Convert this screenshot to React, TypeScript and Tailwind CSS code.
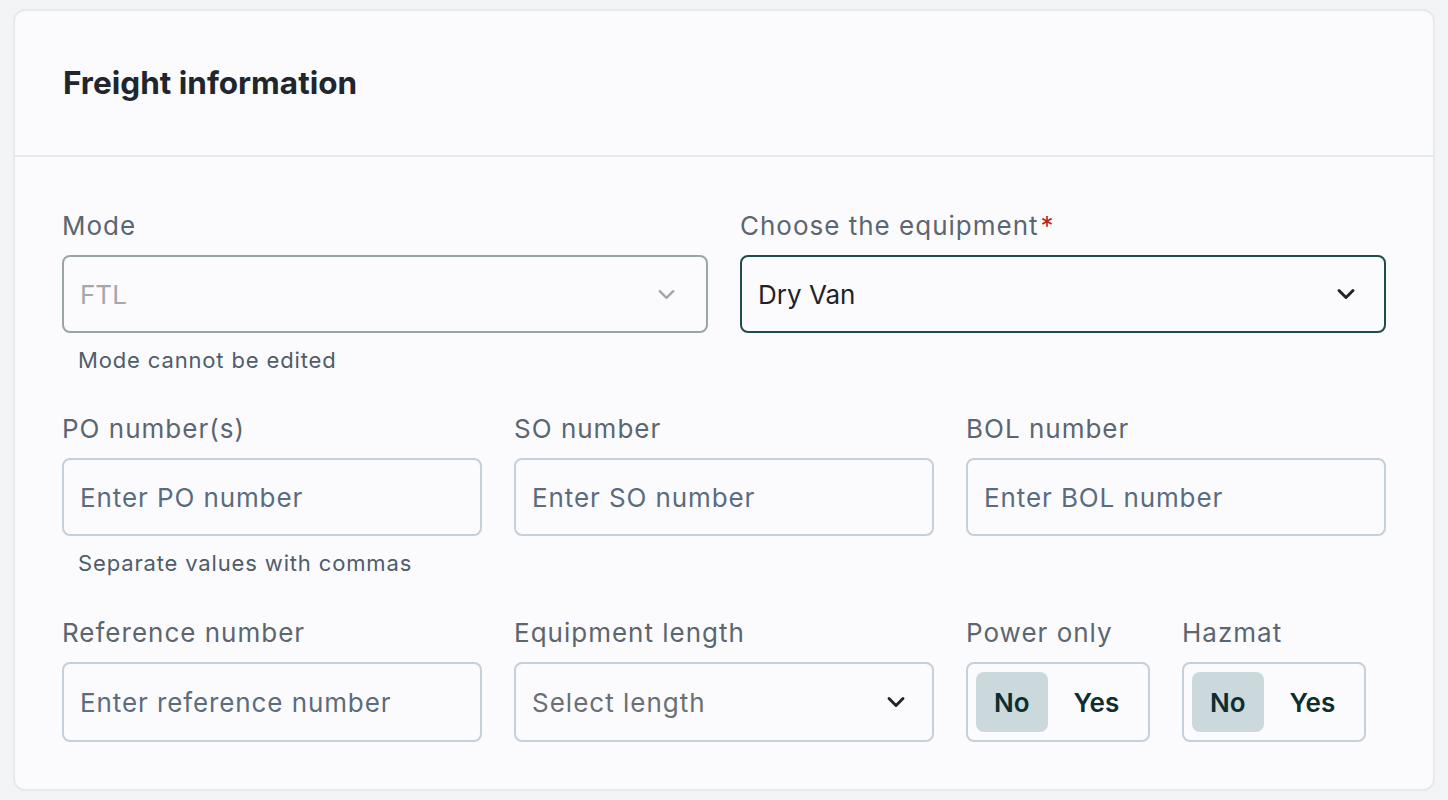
import { ChevronDown } from "lucide-react";

const FONT = { fontFamily: "Inter, 'Noto Sans', sans-serif" };

function Label({ children, required }: { children: React.ReactNode; required?: boolean }) {
  return (
    <div className="mb-[13px] h-8 text-[26px] leading-8 tracking-[1px] text-[#5b6670]">
      {children}
      {required && <span className="ml-0.5 text-[#b3261e]">*</span>}
    </div>
  );
}

function Helper({ children }: { children: React.ReactNode }) {
  return (
    <div className="mt-[13px] pl-4 text-[22px] leading-7 tracking-[0.85px] text-[#4f5d6b]">{children}</div>
  );
}

function TextInput({ placeholder }: { placeholder: string }) {
  return (
    <div className="flex h-[78px] items-center rounded-lg border-2 border-[#c6d0da] px-4 text-[26px] tracking-[0.9px] text-[#5a6c7e]">
      {placeholder}
    </div>
  );
}

function Toggle() {
  return (
    <div className="flex h-[80px] w-[184px] items-center gap-2 rounded-lg border-2 border-[#c6d0da] p-2">
      <div className="flex h-[60px] items-center rounded-lg bg-[#cbd9dc] px-[18px] text-[26px] font-semibold text-[#0d2e2c]">
        No
      </div>
      <div className="flex h-[60px] items-center px-[18px] text-[26px] font-semibold text-[#0d2e2c]">
        Yes
      </div>
    </div>
  );
}

export default function App() {
  return (
    <div className="min-h-screen bg-[#f3f4f6] px-[13px] pt-[9px]" style={FONT}>
      <div className="w-[1422px] rounded-xl border-2 border-[#e6e9ee] bg-[#fbfbfd]">
        {/* Header */}
        <div className="flex h-[146px] items-center border-b-2 border-[#e6e9ee] px-[48px]">
          <h2 className="text-[31.5px] font-bold text-[#1f262e]">Freight information</h2>
        </div>

        {/* Body */}
        <div className="px-[47px] pt-[53px] pb-[47px]">
          {/* Row 1 */}
          <div className="grid grid-cols-2 gap-8">
            <div>
              <Label>Mode</Label>
              <div className="flex h-[78px] items-center justify-between rounded-lg border-2 border-[#9ba5a8] pl-4 pr-[26px] text-[26px] text-[#a5a7a9]">
                FTL
                <ChevronDown size={27} strokeWidth={2} className="text-[#a2a6a9]" />
              </div>
              <Helper>Mode cannot be edited</Helper>
            </div>
            <div>
              <Label required>Choose the equipment</Label>
              <div className="flex h-[78px] items-center justify-between rounded-lg border-2 border-[#1e4e4b] pl-4 pr-[24px] text-[26px] text-[#1f2328]">
                Dry Van
                <ChevronDown size={28} strokeWidth={2.5} className="text-[#1f2328]" />
              </div>
            </div>
          </div>

          {/* Row 2 */}
          <div className="mt-[39px] grid grid-cols-3 gap-8">
            <div>
              <Label>PO number(s)</Label>
              <TextInput placeholder="Enter PO number" />
              <Helper>Separate values with commas</Helper>
            </div>
            <div>
              <Label>SO number</Label>
              <TextInput placeholder="Enter SO number" />
            </div>
            <div>
              <Label>BOL number</Label>
              <TextInput placeholder="Enter BOL number" />
            </div>
          </div>

          {/* Row 3 */}
          <div className="mt-[40px] grid grid-cols-3 gap-8">
            <div>
              <Label>Reference number</Label>
              <div className="flex h-[80px] items-center rounded-lg border-2 border-[#c6d0da] px-4 text-[26px] tracking-[0.9px] text-[#5a6c7e]">
                Enter reference number
              </div>
            </div>
            <div>
              <Label>Equipment length</Label>
              <div className="flex h-[80px] items-center justify-between rounded-lg border-2 border-[#c6d0da] pl-4 pr-[22px] text-[26px] tracking-[1px] text-[#6b6f73]">
                Select length
                <ChevronDown size={28} strokeWidth={2.5} className="text-[#1f2328]" />
              </div>
            </div>
            <div className="flex gap-8">
              <div>
                <Label>Power only</Label>
                <Toggle />
              </div>
              <div>
                <Label>Hazmat</Label>
                <Toggle />
              </div>
            </div>
          </div>
        </div>
      </div>
    </div>
  );
}
